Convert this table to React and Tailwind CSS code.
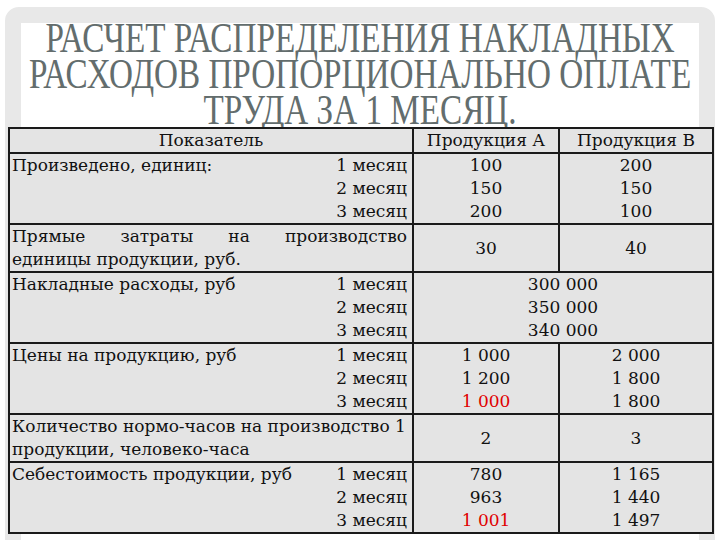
import React from 'react';

/* ─── data ─────────────────────────────────────────────── */
const MONTHS = ['1 месяц', '2 месяц', '3 месяц'];

const RED = 'text-[#e00000]';

const TITLE = [
  'РАСЧЕТ РАСПРЕДЕЛЕНИЯ НАКЛАДНЫХ',
  'РАСХОДОВ ПРОПОРЦИОНАЛЬНО ОПЛАТЕ',
  'ТРУДА ЗА 1 МЕСЯЦ.',
];

function Months() {
  return (
    <div className="text-right whitespace-nowrap">
      {MONTHS.map(m => <div key={m}>{m}</div>)}
    </div>
  );
}

function Stack({ values }) {
  return (
    <div className="text-center">
      {values.map((v, i) => (
        <div key={i} className={v.red ? RED : ''}>{v.t}</div>
      ))}
    </div>
  );
}

const td = 'border-2 border-[#1a1a1a] align-top';

/* ─── component ───────────────────────────────────────── */
export default function App() {
  return (
    <div className="w-[720px] h-[540px] bg-white overflow-hidden pt-[7px] px-[5px]">
      <div className="h-[560px] rounded-[14px] border-[16px] border-[#e8e8e8] bg-white">
        {/* Title */}
        <div
          className="h-[104px] text-[#636d6d] text-[42px] leading-[36px] -mt-[3px] mb-[3px]"
          style={{ fontFamily: '"Liberation Serif", "Times New Roman", serif' }}
        >
          {TITLE.map(line => (
            <div key={line} className="flex justify-center">
              <span className="shrink-0 whitespace-nowrap scale-x-[0.79]">{line}</span>
            </div>
          ))}
        </div>

        {/* Table */}
        <table
          className="relative -ml-[13px] w-[704px] table-fixed border-collapse bg-[#e4e4e4] text-[#111] text-[17px] leading-[23px]"
          style={{ fontFamily: '"DejaVu Serif", "Liberation Serif", serif' }}
        >
          <colgroup>
            <col className="w-[404px]" />
            <col className="w-[146px]" />
            <col className="w-[154px]" />
          </colgroup>
          <tbody>
            <tr>
              <td className={`${td} text-center`}>Показатель</td>
              <td className={`${td} text-center`}>Продукция А</td>
              <td className={`${td} text-center`}>Продукция В</td>
            </tr>

            <tr>
              <td className={`${td} pl-[2px] pr-[5px]`}>
                <div className="flex justify-between">
                  <span>Произведено, единиц:</span>
                  <Months />
                </div>
              </td>
              <td className={td}><Stack values={[{ t: '100' }, { t: '150' }, { t: '200' }]} /></td>
              <td className={td}><Stack values={[{ t: '200' }, { t: '150' }, { t: '100' }]} /></td>
            </tr>

            <tr>
              <td className={`${td} pl-[2px] pr-[5px]`}>
                <div className="text-justify [text-align-last:justify]">Прямые затраты на производство</div>
                <div>единицы продукции, руб.</div>
              </td>
              <td className={`${td} !align-middle text-center`}>30</td>
              <td className={`${td} !align-middle text-center`}>40</td>
            </tr>

            <tr>
              <td className={`${td} pl-[2px] pr-[5px]`}>
                <div className="flex justify-between">
                  <span>Накладные расходы, руб</span>
                  <Months />
                </div>
              </td>
              <td colSpan={2} className={td}>
                <Stack values={[{ t: '300 000' }, { t: '350 000' }, { t: '340 000' }]} />
              </td>
            </tr>

            <tr>
              <td className={`${td} pl-[2px] pr-[5px]`}>
                <div className="flex justify-between">
                  <span>Цены на продукцию, руб</span>
                  <Months />
                </div>
              </td>
              <td className={td}><Stack values={[{ t: '1 000' }, { t: '1 200' }, { t: '1 000', red: true }]} /></td>
              <td className={td}><Stack values={[{ t: '2 000' }, { t: '1 800' }, { t: '1 800' }]} /></td>
            </tr>

            <tr>
              <td className={`${td} pl-[2px] pr-[5px]`}>
                Количество нормо-часов на производство 1 продукции, человеко-часа
              </td>
              <td className={`${td} !align-middle text-center`}>2</td>
              <td className={`${td} !align-middle text-center`}>3</td>
            </tr>

            <tr>
              <td className={`${td} pl-[2px] pr-[5px]`}>
                <div className="flex justify-between">
                  <span>Себестоимость продукции, руб</span>
                  <Months />
                </div>
              </td>
              <td className={td}><Stack values={[{ t: '780' }, { t: '963' }, { t: '1 001', red: true }]} /></td>
              <td className={td}><Stack values={[{ t: '1 165' }, { t: '1 440' }, { t: '1 497' }]} /></td>
            </tr>
          </tbody>
        </table>
      </div>
    </div>
  );
}
